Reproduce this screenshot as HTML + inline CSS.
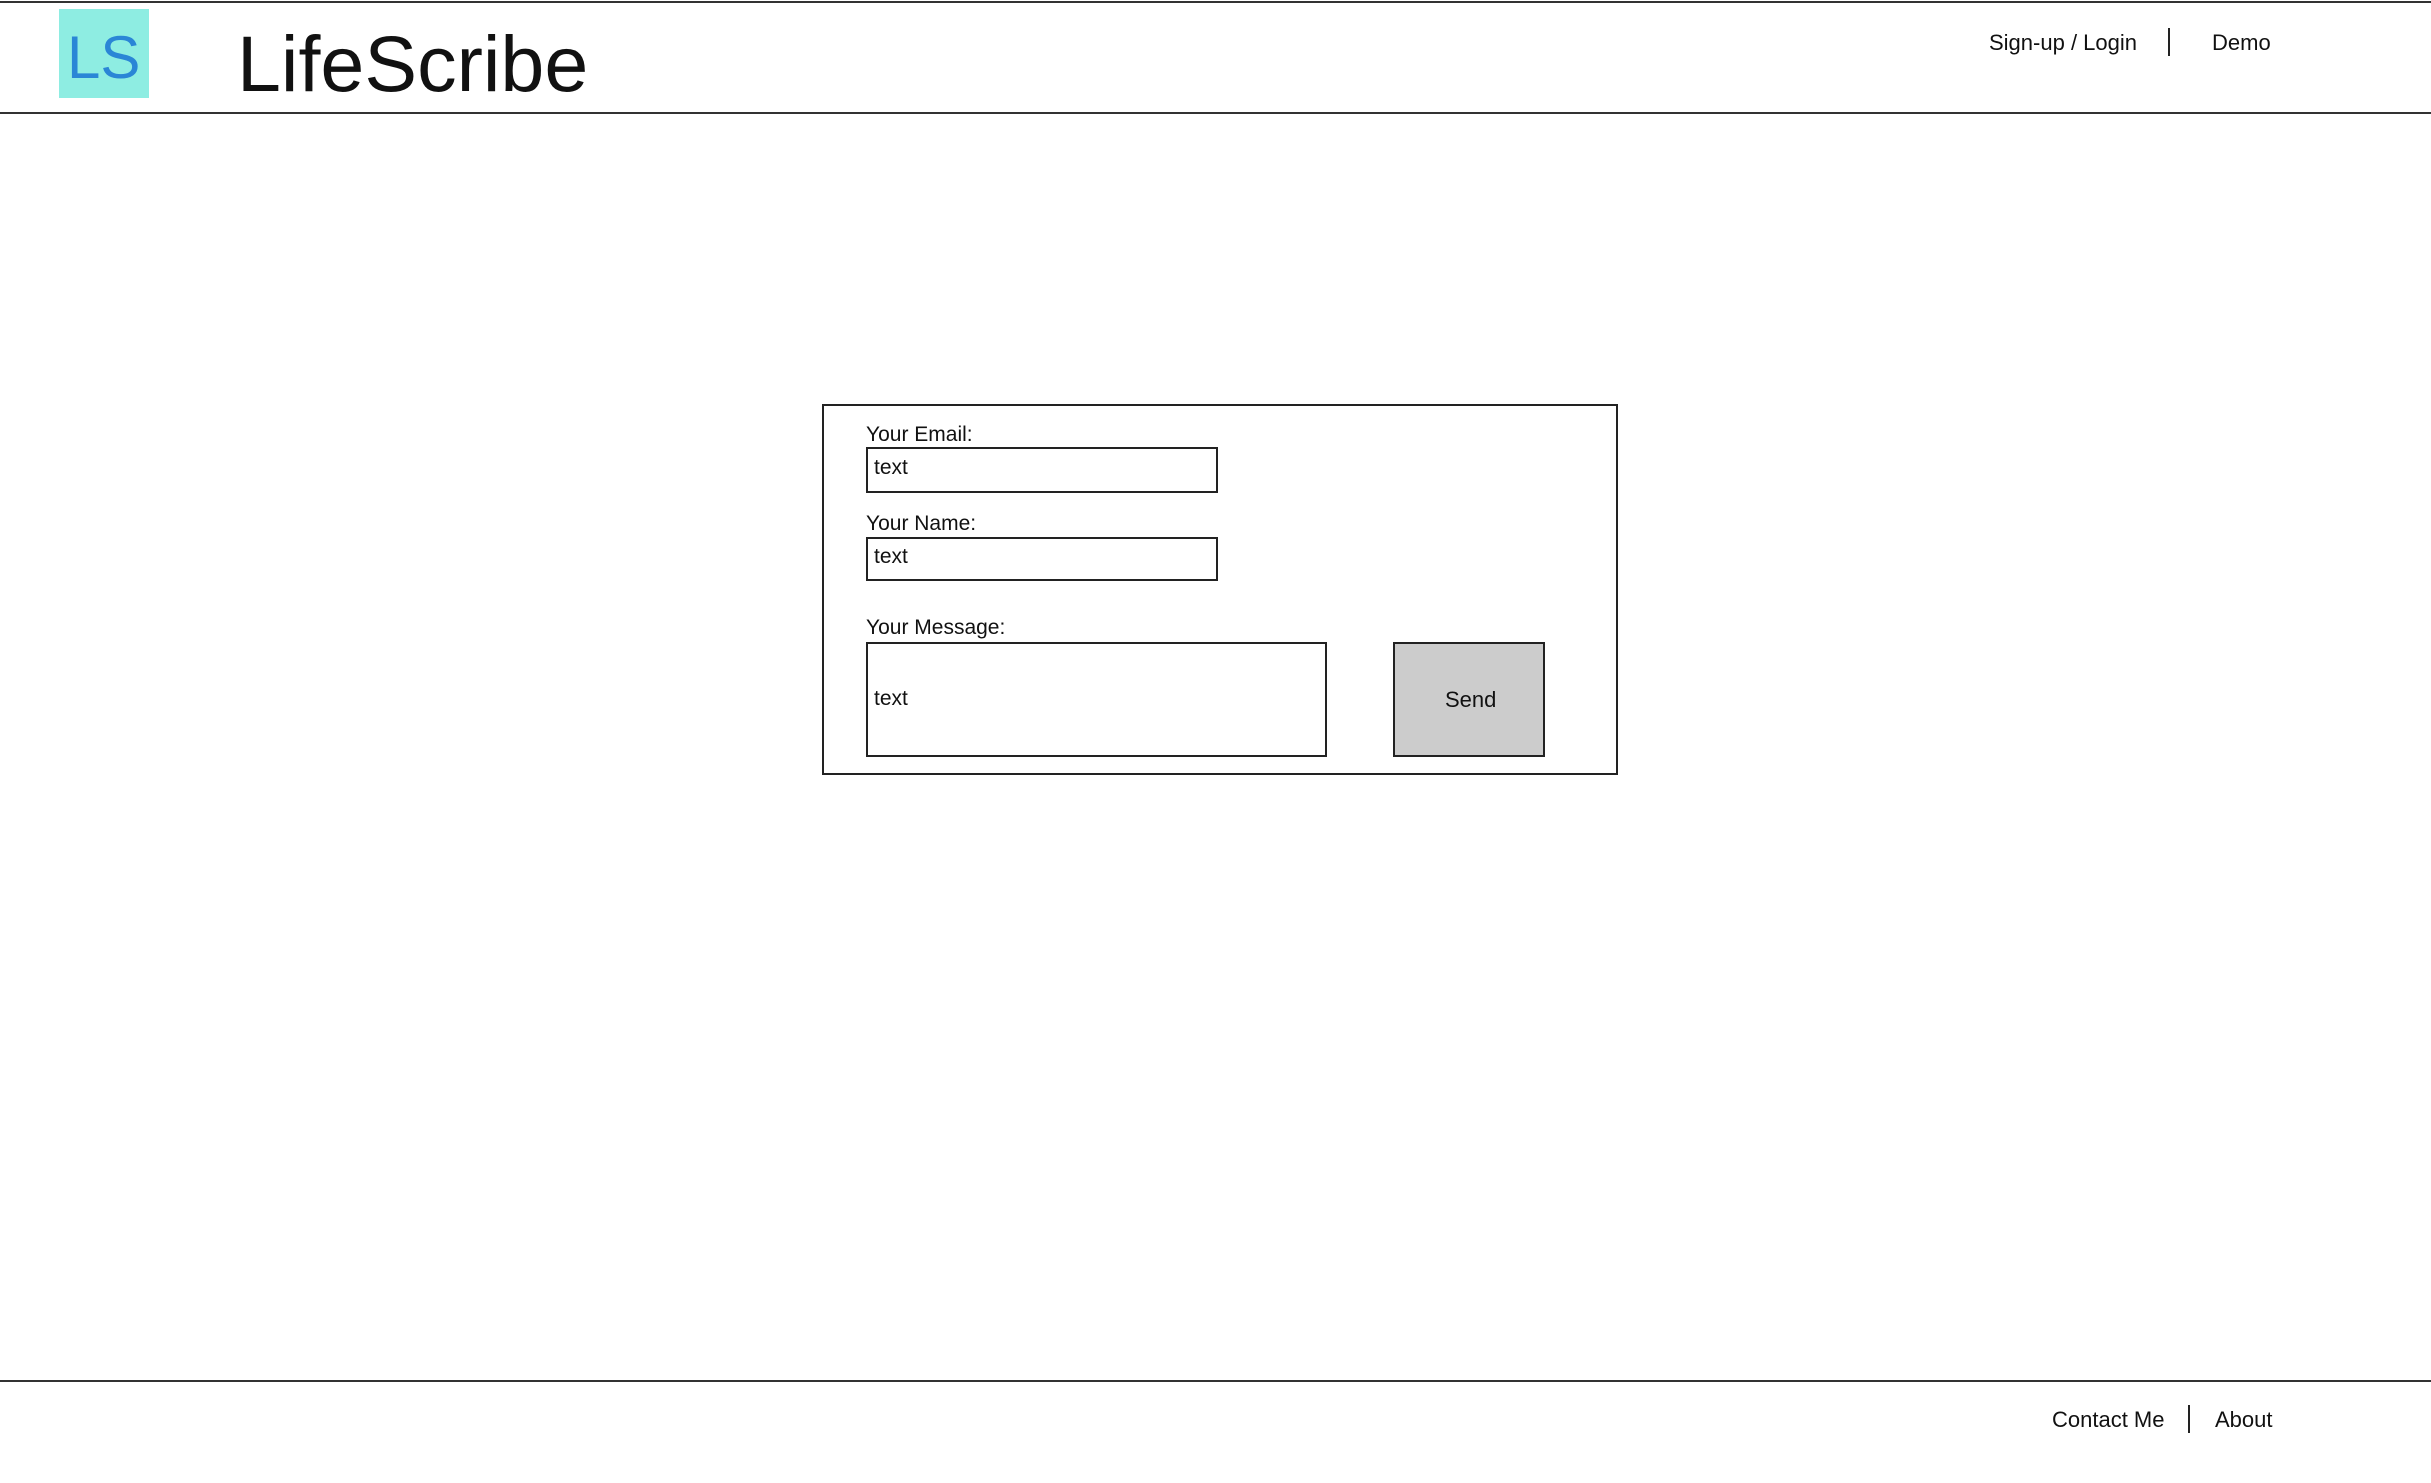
<!DOCTYPE html>
<html><head><meta charset="utf-8"><style>
*{margin:0;padding:0;box-sizing:border-box}
body{width:2431px;height:1483px;background:#fff;position:relative;overflow:hidden;font-family:"Liberation Sans",sans-serif;color:#111}
.a{position:absolute}
.line{position:absolute;left:0;width:2431px;height:2px;background:#333}
.t{position:absolute;white-space:nowrap;line-height:1}
.box{position:absolute;border:2px solid #222;background:#fff}
</style></head><body>
<div class="line" style="top:1px"></div>
<div class="line" style="top:112px"></div>
<div class="a" style="left:59px;top:9px;width:90px;height:89px;background:#8eede2"></div>
<div class="t" style="left:67px;top:28px;font-size:60px;color:#2a86d6;">LS</div>
<div class="t" style="left:237px;top:24px;font-size:79px;letter-spacing:0px">LifeScribe</div>
<div class="t" style="left:1989px;top:32px;font-size:22px">Sign-up / Login</div>
<div class="a" style="left:2168px;top:28px;width:2px;height:28px;background:#222"></div>
<div class="t" style="left:2212px;top:32px;font-size:22px">Demo</div>

<div class="box" style="left:822px;top:404px;width:796px;height:371px"></div>
<div class="t" style="left:866px;top:424px;font-size:21px">Your Email:</div>
<div class="box" style="left:866px;top:447px;width:352px;height:46px"></div>
<div class="t" style="left:874px;top:457px;font-size:21px">text</div>
<div class="t" style="left:866px;top:513px;font-size:21px">Your Name:</div>
<div class="box" style="left:866px;top:537px;width:352px;height:44px"></div>
<div class="t" style="left:874px;top:546px;font-size:21px">text</div>
<div class="t" style="left:866px;top:617px;font-size:21px">Your Message:</div>
<div class="box" style="left:866px;top:642px;width:461px;height:115px"></div>
<div class="t" style="left:874px;top:688px;font-size:21px">text</div>
<div class="box" style="left:1393px;top:642px;width:152px;height:115px;background:#cccccc"></div>
<div class="t" style="left:1445px;top:689px;font-size:22px">Send</div>

<div class="line" style="top:1380px"></div>
<div class="t" style="left:2052px;top:1409px;font-size:22px">Contact Me</div>
<div class="a" style="left:2188px;top:1405px;width:2px;height:28px;background:#222"></div>
<div class="t" style="left:2215px;top:1409px;font-size:22px">About</div>
</body></html>
